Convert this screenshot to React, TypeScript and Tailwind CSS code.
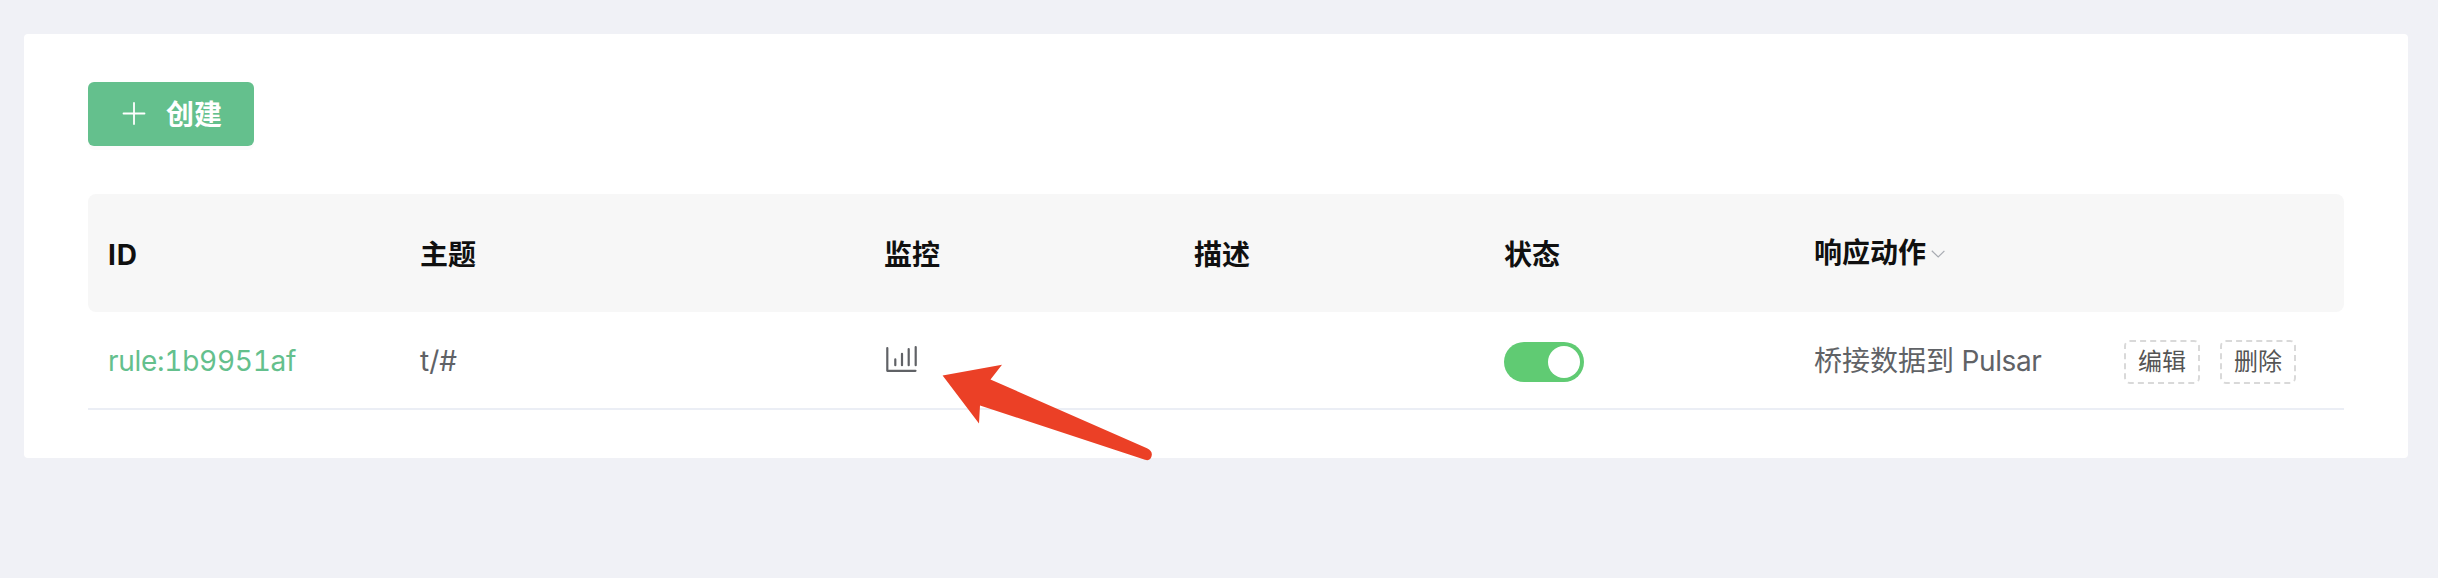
import type { ReactNode } from "react";

const COLUMNS = "grid grid-cols-[312px_464px_310px_310px_310px_310px_240px]";

function PlusIcon() {
  return (
    <svg className="ml-[34px] h-6 w-6" viewBox="0 0 24 24" fill="none" stroke="white" strokeWidth="1.8" strokeLinecap="round">
      <path d="M1.5 11.5H22.5M12 1V22" />
    </svg>
  );
}

function ChartIcon() {
  return (
    <svg className="-mt-1 h-7 w-[34px]" viewBox="0 0 34 28" fill="none" stroke="#606266" strokeWidth="2.2" strokeLinecap="round" strokeLinejoin="round">
      <path d="M3.3 4V26.8H31.5M11.3 15.4V21.2M18 9.8V21.2M24.7 5V21.2M31.7 3V21.2" />
    </svg>
  );
}

function Cell({ children }: { children?: ReactNode }) {
  return <div className="flex items-center px-5">{children}</div>;
}

function ActionButton({ children }: { children: ReactNode }) {
  return (
    <button className="flex h-11 w-[76px] shrink-0 items-center justify-center rounded-md border-2 border-dashed border-[#d9d9d9] text-2xl text-[#555]">
      {children}
    </button>
  );
}

export default function App() {
  return (
    <main className="h-[578px] w-[2438px] bg-[#f0f1f6] px-6 pt-[34px] pr-[30px] font-['Inter','Noto_Sans_CJK_SC',sans-serif] text-[28px] leading-10 text-[#606266]">
      <section className="relative h-[424px] rounded-[4px] bg-white px-16 pt-12">
        <button className="flex h-16 w-[166px] items-center rounded-md bg-[#64c08d] font-semibold text-white shadow-[0_4px_0_rgba(0,0,0,0.015)]">
          <PlusIcon />
          <span className="mt-0.5 ml-5">创建</span>
        </button>

        <div className="mt-12">
          <div className={`${COLUMNS} h-[118px] rounded-lg bg-[#f7f7f7] pt-[3px] font-semibold text-[#101010]`}>
            <Cell>
              <span className="font-bold tracking-[0.8px]">ID</span>
            </Cell>
            <Cell>主题</Cell>
            <Cell>监控</Cell>
            <Cell>描述</Cell>
            <Cell>状态</Cell>
            <Cell>
              <span className="-mt-[3px]">响应动作</span>
              <svg className="-mt-0.5 ml-[5px] h-2 w-[14px]" viewBox="0 0 14 8" fill="none" stroke="#a8abb2" strokeWidth="1.2">
                <path d="M.8 .8L7.2 7L13.4 .8" />
              </svg>
            </Cell>
            <Cell />
          </div>
          <div className={`${COLUMNS} h-[98px] border-b-2 border-[#ebeef5]`}>
            <Cell>
              <span className="mt-0.5 tracking-[-0.28px] text-[#64c08d] tabular-nums">rule:1b9951af</span>
            </Cell>
            <Cell>
              <span className="mt-0.5">t/#</span>
            </Cell>
            <Cell>
              <ChartIcon />
            </Cell>
            <Cell />
            <Cell>
              <div className="mt-1 flex h-10 w-20 items-center justify-end rounded-full bg-[#60cb73] pr-1">
                <div className="h-8 w-8 rounded-full bg-white" />
              </div>
            </Cell>
            <Cell>
              <span className="mt-0.5 whitespace-pre">
                桥接数据到<span className="tracking-[-0.4px]"> Pulsar</span>
              </span>
            </Cell>
            <div className="mt-1 flex items-center gap-5 pl-5">
              <ActionButton>编辑</ActionButton>
              <ActionButton>删除</ActionButton>
            </div>
          </div>
        </div>

        <svg className="absolute top-[326px] left-[916px] h-[104px] w-[216px]" viewBox="0 0 216 104" fill="#eb4026">
          <path d="M2.6 15.5L62 4.7L50.5 19.5L207 88.3Q212.3 91 211.8 95Q211 101.5 205 99.8L40 45.5L39 63.5Z" />
        </svg>
      </section>
    </main>
  );
}
